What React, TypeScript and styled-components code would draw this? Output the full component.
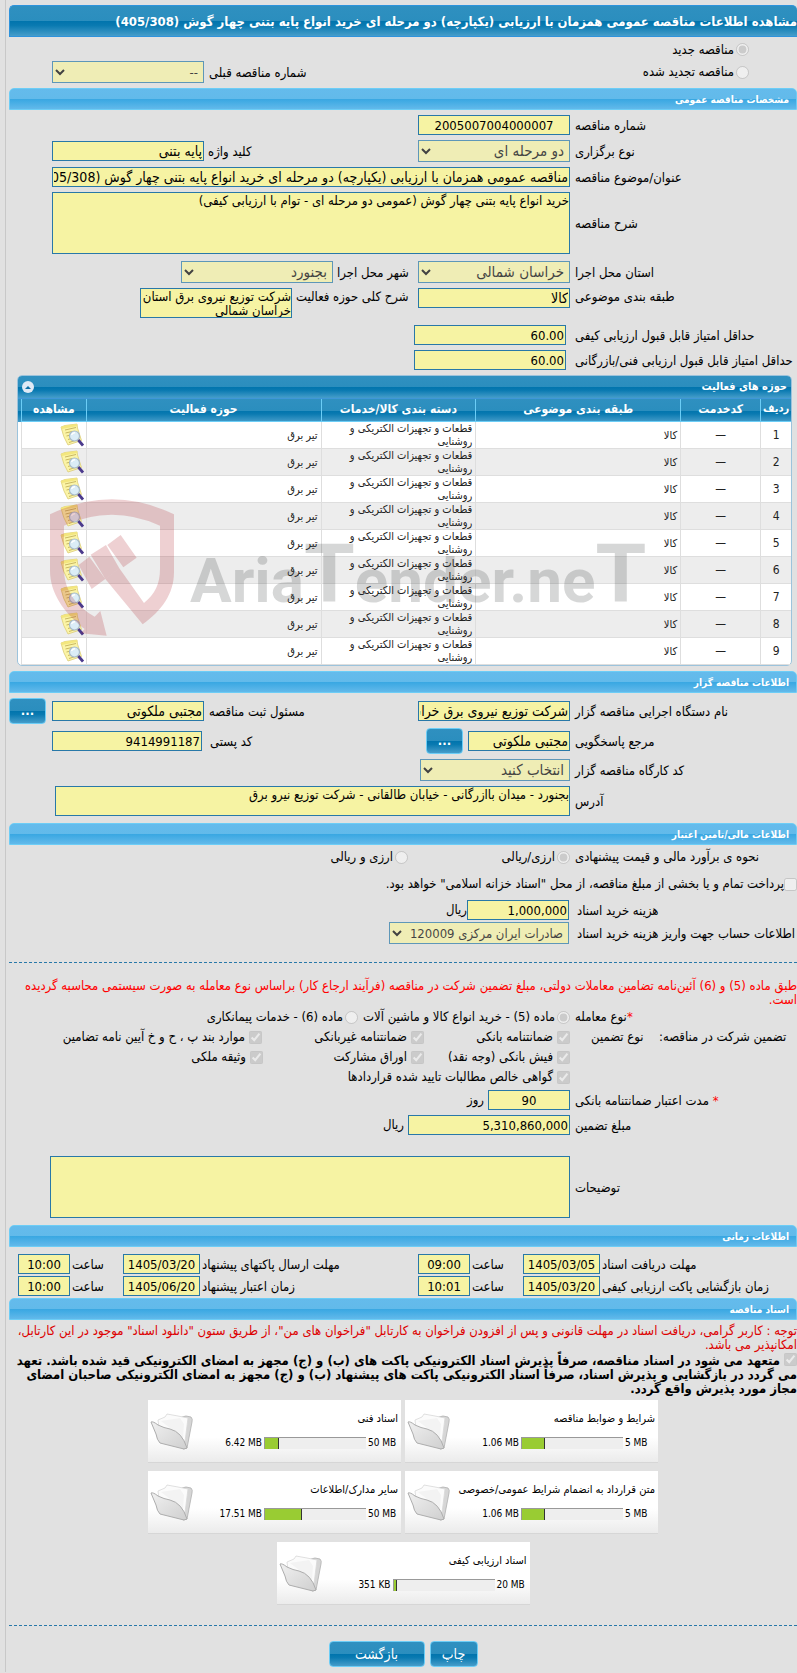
import React from "react";
import styled, { createGlobalStyle, css } from "styled-components";

const Global = createGlobalStyle`
  *, *::before, *::after { box-sizing: border-box; }
  html { background: #e1e1e1; overflow-x: hidden; }
  body {
    margin: 0;
    background: #e1e1e1;
    color: #000;
    font: 13px/14px "DejaVu Sans Condensed", "DejaVu Sans", sans-serif;
  }
`;

const deep = css`
  background: linear-gradient(#2f90c0, #2b8ebe 50%, #0074ad 50%, #0a7ab1 65%, #469dca);
`;

const Page = styled.main`
  margin-left: 5px;
  padding: 5px 0 5px 3px;
  border-left: 1px solid #c8c8c8;
`;

const Title = styled.h1`
  ${deep}
  margin: 0;
  height: 32px;
  border: 1px solid #2e93dc;
  border-right: 0;
  border-radius: 5px 5px 0 0;
  color: #fff;
  font-size: 13px;
  line-height: 32px;
  white-space: nowrap;
`;

const Bar = styled.h2<{ $top?: number }>`
  margin: ${(p) => p.$top ?? 5}px 0 0;
  padding: 0 7px;
  height: 22px;
  border: 1px solid #6ccdf6;
  border-radius: 5px 5px 0 0;
  background: linear-gradient(#64bbec, #62baea 50%, #38a7e2 50%, #62b9ea);
  color: #fff;
  font-size: 10px;
  line-height: 22px;
`;

const Row = styled.div<{ $top?: number; $h?: number; $align?: string }>`
  display: flex;
  align-items: ${(p) => p.$align ?? "center"};
  margin-top: ${(p) => p.$top ?? 5}px;
  min-height: ${(p) => p.$h ?? 20}px;
`;

const Label = styled.label<{ $w?: number; $gap?: number }>`
  flex: 0 0 ${(p) => p.$w ?? 227}px;
  padding-top: 2px;
  padding-left: ${(p) => p.$gap ?? 5}px;
  text-align: left;
  white-space: nowrap;
`;

const SideLabel = styled(Label)`
  flex: 1 1 0;
`;

const Caption = styled.span<{ $w?: number; $gap?: number }>`
  flex: 0 0 ${(p) => p.$w ?? 227}px;
  padding-left: ${(p) => p.$gap ?? 5}px;
  text-align: left;
  white-space: nowrap;
`;

type FieldProps = {
  $w?: number;
  $end?: number;
  $start?: number;
  $center?: boolean;
  $size?: number;
};

const field = css<FieldProps>`
  ${(p) => (p.$w ? `flex: 0 0 ${p.$w}px; width: ${p.$w}px;` : "flex: 1 1 0; min-width: 0;")}
  margin: 0 ${(p) => p.$start ?? 0}px 0 ${(p) => p.$end ?? 0}px;
  border: 1px solid #2878a8;
  border-radius: 0;
  background: #f6f3a3;
  color: #000;
  font-family: inherit;
  font-size: ${(p) => p.$size ?? 13}px;
  outline: 0;
  ${(p) => p.$center && "text-align: center;"}
`;

const Input = styled.input`
  ${field}
  height: 20px;
  padding: 0 1px;
`;

/* Persian text in single-line fields */
const TextInput = styled(Input).attrs({ $size: 14 })``;

const Area = styled.textarea<{ $h: number }>`
  ${field}
  display: block;
  height: ${(p) => p.$h}px;
  padding: 1px 0;
  line-height: 14px;
  resize: none;
  overflow: hidden;
`;

const Select = styled.select`
  ${field}
  height: 22px;
  padding: 0 1px;
  opacity: 0.7;
`;

const Tick = styled.input`
  flex: none;
  width: 13px;
  height: 13px;
  margin: 0;
`;

const Choice = styled.label<{ $w?: number; $gap?: number }>`
  display: flex;
  align-items: center;
  gap: ${(p) => p.$gap ?? 2}px;
  ${(p) => p.$w && `flex: 0 0 ${p.$w}px;`}
  white-space: nowrap;
`;

const Button = styled.button<{ $w: number }>`
  ${deep}
  flex: none;
  width: ${(p) => p.$w}px;
  height: 26px;
  padding: 0;
  border: 1px solid #6ccdf6;
  border-radius: 4px;
  color: #fff;
  font: 14px/22px "DejaVu Sans Condensed", "DejaVu Sans", sans-serif;
`;

const Dots = styled(Button)`
  font-size: 13px;
  font-weight: bold;
`;

const Rule = styled.hr<{ $top: number }>`
  margin: ${(p) => p.$top}px 0 0;
  border: 0;
  border-top: 1px dashed #2878a8;
`;

const Notice = styled.p<{ $top: number; $color: string }>`
  margin: ${(p) => p.$top}px 0 0;
  color: ${(p) => p.$color};
`;

const Pledge = styled.label`
  display: block;
  margin-top: 1px;
  font-weight: bold;
  input { vertical-align: -1px; margin-left: 4px; }
`;

const Star = styled.span`
  color: #f00;
`;

/* activity table */
const Panel = styled.section`
  position: relative;
  margin: 5px 5px 0 8px;
  border: 1px solid #9cc3dc;
  border-radius: 5px;
  background: #fff;
`;

const PanelHead = styled.header`
  ${deep}
  display: flex;
  align-items: center;
  justify-content: space-between;
  height: 23px;
  padding: 0 4px;
  border-bottom: 1px solid #3f97d8;
  border-radius: 4px 4px 0 0;
  color: #fff;
  font-size: 11px;
  font-weight: bold;
`;

const Fold = styled.button`
  display: grid;
  place-items: center;
  width: 12px;
  height: 12px;
  padding: 0;
  border: 0;
  border-radius: 50%;
  background: #dfe9f5;
`;

const TableWrap = styled.div`
  ${deep}
  background-size: 100% 23px;
  background-repeat: no-repeat;
  padding-left: 3px;
`;

const Table = styled.table`
  width: 100%;
  table-layout: fixed;
  border-collapse: separate;
  border-spacing: 0;
  th {
    height: 23px;
    padding: 0 0 3px;
    border-left: 1px solid #6ccdf6;
    border-bottom: 1px solid #6ccdf6;
    color: #fff;
    font-size: 12px;
    white-space: nowrap;
  }
  th:first-child { font-size: 11px; }
  td {
    height: 27px;
    padding: 0 3px 0 4px;
    border-left: 1px solid #dedede;
    border-bottom: 1px solid #dedede;
    color: #222;
    font-size: 11px;
    line-height: 13px;
  }
  tbody tr:nth-child(even) { background: #ededed; }
`;

const Mid = styled.td`
  && { text-align: center; font-size: 12px; padding: 0; }
`;

const IconCell = styled.td`
  && { padding: 0 2px 0 0; }
`;

const IconButton = styled.button`
  display: inline-block;
  width: 24px;
  height: 24px;
  padding: 0;
  border: 0;
  background: none;
  vertical-align: top;
`;

const Watermark = styled.svg`
  position: absolute;
  left: 32px;
  bottom: 22px;
  width: 604px;
  height: 144px;
  pointer-events: none;
`;

/* file cards */
const Cards = styled.div`
  display: flex;
  flex-wrap: wrap;
  justify-content: center;
  gap: 8px 4px;
  max-width: 510px;
  margin: 4px auto 0;
`;

const Card = styled.article`
  display: flex;
  direction: ltr;
  width: 253px;
  height: 63px;
  padding: 12px 3px 0 2px;
  border-bottom: 1px solid #d6d6d6;
  background: linear-gradient(#fff 60%, #ebebeb);
  font-size: 10px;
`;

const CardBody = styled.div`
  flex: 1;
  min-width: 0;
`;

const CardTitle = styled.h3`
  margin: 0;
  direction: rtl;
  font-size: 11px;
  font-weight: normal;
  line-height: 13px;
  white-space: nowrap;
`;

const Usage = styled.div`
  display: flex;
  align-items: center;
  gap: 2px;
  margin-top: 11px;
`;

const Used = styled.span`
  flex: 1;
  text-align: right;
`;

const Total = styled.span`
  width: 30px;
`;

const Track = styled.div`
  width: 102px;
  height: 12px;
  border-top: 1px solid #999;
  border-left: 1px solid #999;
  background: #eee;
`;

const Fill = styled.div`
  height: 100%;
  border-right: 1px solid #333;
  background: #9c3;
`;

const Actions = styled.footer`
  display: flex;
  justify-content: center;
  gap: 5px;
  margin-top: 15px;
`;

const NoteIcon = () => (
  <svg width="24" height="24" viewBox="0 0 24 24" aria-hidden="true">
    <path d="M1 4 L5 2.5 L17 1 L17.5 5 L21.5 17.5 L8 22 Q3 14 1 4Z" fill="#fbf4a6" stroke="#dccd78" strokeWidth=".8" />
    <path d="M1 4 L5 2.5 L17 1 L17.2 3 L2 6Z" fill="#f3e67e" />
    <path d="M5 7 L16 4.5 M5.5 10 L12 8.5 M6.5 13 L10 12.2 M8 16.5 L11 15.6 M9 19.5 L17 17" stroke="#c9b862" strokeWidth="1" fill="none" />
    <circle cx="14.5" cy="13" r="5" fill="#dbedf7" stroke="#a9bccb" strokeWidth="1.2" />
    <path d="M11.5 12 Q12.5 9.5 15 9.8" stroke="#fff" strokeWidth="1.3" fill="none" />
    <path d="M18.3 17 L23 22.5" stroke="#4b3a8c" strokeWidth="2.8" />
  </svg>
);

const FolderIcon = () => (
  <svg width="44" height="40" viewBox="0 0 44 40" aria-hidden="true">
    <defs>
      <linearGradient id="fold" x1="0" y1="0" x2="1" y2="1">
        <stop offset="0" stopColor="#f0f0f0" />
        <stop offset="1" stopColor="#cfcfcf" />
      </linearGradient>
    </defs>
    <path d="M28 8 Q32 4 36 4 L41 5 Q43 7 42 10 L37 36 L33 37Z" fill="#d6d6d6" stroke="#b0b0b0" strokeWidth=".8" />
    <path d="M8 8 L15 5 L17 2 L28 4 L38 6 L35 30 L10 24Z" fill="#fbfbfb" stroke="#d8d8d8" strokeWidth=".8" />
    <path d="M11 9 L30 6 L34 12 L33 26Z" fill="#f3f3f3" />
    <path d="M1 10 Q3 9 8 13 Q14 16 20 17 Q32 20 37 36 L34 37 L10 31 Q7 28 6 22Z" fill="url(#fold)" stroke="#adadad" strokeWidth="1" />
  </svg>
);

const rows = [1, 2, 3, 4, 5, 6, 7, 8, 9];
const files = [
  { name: "شرایط و ضوابط مناقصه", used: "1.06 MB", total: "5 MB", pct: 23 },
  { name: "اسناد فنی", used: "6.42 MB", total: "50 MB", pct: 14 },
  { name: "متن قرارداد به انضمام شرایط عمومی/خصوصی", used: "1.06 MB", total: "5 MB", pct: 23 },
  { name: "سایر مدارک/اطلاعات", used: "17.51 MB", total: "50 MB", pct: 37 },
  { name: "اسناد ارزیابی کیفی", used: "351 KB", total: "20 MB", pct: 3 },
];

type DateProps = { id: string; label: string; date: string; time: string; first?: boolean };
const DateGroup = ({ id, label, date, time, first }: DateProps) => (
  <>
    {first ? (
      <Label htmlFor={id} $w={197} $gap={2}>{label}</Label>
    ) : (
      <SideLabel htmlFor={id} $gap={2}>{label}</SideLabel>
    )}
    <Input id={id} $w={77} $center readOnly value={date} />
    <Label htmlFor={id + "h"} $w={53} $gap={2}>ساعت</Label>
    <Input id={id + "h"} $w={52} $center readOnly value={time} $end={first ? 0 : 9} />
  </>
);

export default function App() {
  return (
    <Page dir="rtl">
      <Global />
      <Title>مشاهده اطلاعات مناقصه عمومی همزمان با ارزیابی (یکپارچه) دو مرحله ای خرید انواع پایه بتنی چهار گوش (405/308)</Title>

      <Row $top={1} $h={23}>
        <Caption $w={48} />
        <Choice><Tick type="radio" name="kind" disabled defaultChecked />مناقصه جدید</Choice>
      </Row>
      <Row $top={0} $h={22}>
        <Caption $w={48} />
        <Choice><Tick type="radio" name="kind" disabled />مناقصه تجدید شده</Choice>
        <SideLabel htmlFor="prev">شماره مناقصه قبلی</SideLabel>
        <Select id="prev" $w={152} $end={43} disabled><option>--</option></Select>
      </Row>

      <Bar>مشخصات مناقصه عمومی</Bar>
      <Row>
        <Label htmlFor="no">شماره مناقصه</Label>
        <Input id="no" $w={152} $center readOnly value="2005007004000007" />
      </Row>
      <Row $h={22}>
        <Label htmlFor="mode">نوع برگزاری</Label>
        <Select id="mode" $w={152} $size={15} disabled><option>دو مرحله ای</option></Select>
        <SideLabel htmlFor="key" $gap={4}>کلید واژه</SideLabel>
        <TextInput id="key" $w={152} $end={43} readOnly value="پایه بتنی" />
      </Row>
      <Row>
        <Label htmlFor="subject">عنوان/موضوع مناقصه</Label>
        <TextInput id="subject" $end={43} readOnly value="مناقصه عمومی همزمان با ارزیابی (یکپارچه) دو مرحله ای خرید انواع پایه بتنی چهار گوش (405/308)" />
      </Row>
      <Row>
        <Label htmlFor="desc">شرح مناقصه</Label>
        <Area id="desc" $h={62} $end={43} readOnly value="خرید انواع پایه بتنی چهار گوش (عمومی دو مرحله ای - توام با ارزیابی کیفی)" />
      </Row>
      <Row $top={7} $h={22}>
        <Label htmlFor="province">استان محل اجرا</Label>
        <Select id="province" $w={152} $size={15} disabled><option>خراسان شمالی</option></Select>
        <Label htmlFor="city" $w={85} $gap={4}>شهر محل اجرا</Label>
        <Select id="city" $w={152} $size={15} disabled><option>بجنورد</option></Select>
      </Row>
      <Row $align="flex-start">
        <Label htmlFor="cat">طبقه بندی موضوعی</Label>
        <TextInput id="cat" $w={152} readOnly value="کالا" />
        <Label htmlFor="scope" $w={126} $gap={4}>شرح کلی حوزه فعالیت</Label>
        <Area id="scope" $w={152} $h={30} readOnly value="شرکت توزیع نیروی برق استان خراسان شمالی" />
      </Row>
      <Row $top={7}>
        <Label htmlFor="s1">حداقل امتیاز قابل قبول ارزیابی کیفی</Label>
        <Input id="s1" $w={152} $start={4} readOnly value="60.00" />
      </Row>
      <Row>
        <Label htmlFor="s2">حداقل امتیاز قابل قبول ارزیابی فنی/بازرگانی</Label>
        <Input id="s2" $w={152} $start={4} readOnly value="60.00" />
      </Row>

      <Panel>
        <PanelHead>
          <span>حوزه های فعالیت</span>
          <Fold type="button" aria-label="بستن">
            <svg width="6" height="3" viewBox="0 0 6 3"><path d="M0 3 L3 0 L6 3Z" fill="#0d6ea5" /></svg>
          </Fold>
        </PanelHead>
        <TableWrap>
          <Table>
            <colgroup>
              <col style={{ width: "4%" }} />
              <col style={{ width: "10.4%" }} />
              <col style={{ width: "26.6%" }} />
              <col style={{ width: "20.1%" }} />
              <col style={{ width: "30.5%" }} />
              <col style={{ width: "8.4%" }} />
            </colgroup>
            <thead>
              <tr>
                <th>ردیف</th>
                <th>کدخدمت</th>
                <th>طبقه بندی موضوعی</th>
                <th>دسته بندی کالا/خدمات</th>
                <th>حوزه فعالیت</th>
                <th>مشاهده</th>
              </tr>
            </thead>
            <tbody>
              {rows.map((n) => (
                <tr key={n}>
                  <Mid>{n}</Mid>
                  <Mid>—</Mid>
                  <td>کالا</td>
                  <td>قطعات و تجهیزات الکتریکی و روشنایی</td>
                  <td>تیر برق</td>
                  <IconCell><IconButton type="button" aria-label="مشاهده"><NoteIcon /></IconButton></IconCell>
                </tr>
              ))}
            </tbody>
          </Table>
        </TableWrap>
        <Watermark viewBox="0 0 604 144" direction="ltr" aria-hidden="true">
          <g transform="scale(.3333)" fill="#aa141e" fillOpacity=".2">
            <path d="M0 46 Q185 -44 372 46 V220 C372 285 335 335 278 376 L166 240 L208 208 L282 312 C315 285 330 255 330 210 V80 Q185 15 42 80 V210 C42 280 85 325 134 353 L151 336 L170 410 L92 403 L104 390 C40 340 0 280 0 215Z" />
            <path d="M172 138 L212 108 L260 176 L220 205Z M122 167 L168 138 L208 208 L166 240Z M86 198 L118 173 L166 240 L125 270Z" />
          </g>
          <text x="140" y="103" fill="#323737" fillOpacity=".2" fontFamily="Roboto, sans-serif" fontWeight="bold" fontSize="62">
            Aria<tspan fontSize="82">T</tspan>ender.ne<tspan fontSize="82">T</tspan>
          </text>
        </Watermark>
      </Panel>

      <Bar>اطلاعات مناقصه گزار</Bar>
      <Row $h={26}>
        <Label htmlFor="org">نام دستگاه اجرایی مناقصه گزار</Label>
        <TextInput id="org" $w={152} readOnly value="شرکت توزیع نیروی برق خراسان شمالی" />
        <SideLabel htmlFor="reg">مسئول ثبت مناقصه</SideLabel>
        <TextInput id="reg" $w={152} $end={6} readOnly value="مجتبی ملکوتی" />
        <Dots type="button" $w={37}>...</Dots>
      </Row>
      <Row $top={4} $h={26}>
        <Label htmlFor="resp">مرجع پاسخگویی</Label>
        <TextInput id="resp" $w={102} $end={5} readOnly value="مجتبی ملکوتی" />
        <Dots type="button" $w={37}>...</Dots>
        <SideLabel htmlFor="post" $gap={8}>کد پستی</SideLabel>
        <Input id="post" $w={150} $end={43} readOnly value="9414991187" />
      </Row>
      <Row $h={22}>
        <Label htmlFor="shop">کد کارگاه مناقصه گزار</Label>
        <Select id="shop" $w={150} $size={15} disabled><option>انتخاب کنید</option></Select>
      </Row>
      <Row>
        <Label htmlFor="addr">آدرس</Label>
        <Area id="addr" $h={30} $end={46} readOnly value="بجنورد - میدان باازرگانی - خیابان طالقانی - شرکت توزیع نیرو برق" />
      </Row>

      <Bar $top={7}>اطلاعات مالی/تامین اعتبار</Bar>
      <Row $top={2}>
        <Caption>نحوه ی برآورد مالی و قیمت پیشنهادی</Caption>
        <Choice $w={162}><Tick type="radio" name="cur" disabled defaultChecked />ارزی/ریالی</Choice>
        <Choice><Tick type="radio" name="cur" disabled />ارزی و ریالی</Choice>
      </Row>
      <Row $top={6} $h={22}>
        <Choice $gap={0}><Tick type="checkbox" disabled />پرداخت تمام و یا بخشی از مبلغ مناقصه، از محل "اسناد خزانه اسلامی" خواهد بود.</Choice>
      </Row>
      <Row>
        <Label htmlFor="cost" $w={228} $gap={8}>هزینه خرید اسناد</Label>
        <Input id="cost" $w={102} readOnly value="1,000,000" />
        <span>ریال</span>
      </Row>
      <Row $top={2} $h={22}>
        <Label htmlFor="acc" $w={228} $gap={8}>اطلاعات حساب جهت واریز هزینه خرید اسناد</Label>
        <Select id="acc" $w={180} disabled><option>صادرات ایران مرکزی 120009</option></Select>
      </Row>

      <Rule $top={18} />
      <Notice $top={16} $color="#f00">طبق ماده (5) و (6) آئین‌نامه تضامین معاملات دولتی، مبلغ تضمین شرکت در مناقصه (فرآیند ارجاع کار) براساس نوع معامله به صورت سیستمی محاسبه گردیده است.</Notice>
      <Row $top={0}>
        <Caption><Star>*</Star>نوع معامله</Caption>
        <Choice $w={212}><Tick type="radio" name="deal" disabled defaultChecked />ماده (5) - خرید انواع کالا و ماشین آلات</Choice>
        <Choice><Tick type="radio" name="deal" disabled />ماده (6) - خدمات پیمانکاری</Choice>
      </Row>
      <Row $top={0}>
        <Caption $w={138} $gap={0}>تضمین شرکت در مناقصه:</Caption>
        <Caption $w={89} $gap={21}>نوع تضمین</Caption>
        <Choice $w={146} $gap={4}><Tick type="checkbox" disabled defaultChecked />ضمانتنامه بانکی</Choice>
        <Choice $w={162} $gap={4}><Tick type="checkbox" disabled defaultChecked />ضمانتنامه غیربانکی</Choice>
        <Choice $gap={4}><Tick type="checkbox" disabled defaultChecked />موارد بند پ ، ح و خ آیین نامه تضامین</Choice>
      </Row>
      <Row $top={0}>
        <Caption />
        <Choice $w={146} $gap={4}><Tick type="checkbox" disabled defaultChecked />فیش بانکی (وجه نقد)</Choice>
        <Choice $w={161} $gap={4}><Tick type="checkbox" disabled defaultChecked />اوراق مشارکت</Choice>
        <Choice $gap={4}><Tick type="checkbox" disabled defaultChecked />وثیقه ملکی</Choice>
      </Row>
      <Row $top={0}>
        <Caption />
        <Choice $gap={4}><Tick type="checkbox" disabled defaultChecked />گواهی خالص مطالبات تایید شده قراردادها</Choice>
      </Row>
      <Row $top={3}>
        <Label htmlFor="days"><Star>*</Star> مدت اعتبار ضمانتنامه بانکی</Label>
        <Input id="days" $w={82} $end={4} $center readOnly value="90" />
        <span>روز</span>
      </Row>
      <Row>
        <Label htmlFor="sum">مبلغ تضمین</Label>
        <Input id="sum" $w={162} $end={4} readOnly value="5,310,860,000" />
        <span>ریال</span>
      </Row>
      <Row $top={21}>
        <Label htmlFor="notes">توضیحات</Label>
        <Area id="notes" $h={62} $end={41} readOnly value="" />
      </Row>

      <Bar $top={7}>اطلاعات زمانی</Bar>
      <Row $top={7}>
        <DateGroup id="d1" first label="مهلت دریافت اسناد" date="1405/03/05" time="09:00" />
        <DateGroup id="d2" label="مهلت ارسال پاکتهای پیشنهاد" date="1405/03/20" time="10:00" />
      </Row>
      <Row $top={2}>
        <DateGroup id="d3" first label="زمان بازگشایی پاکت ارزیابی کیفی" date="1405/03/20" time="10:01" />
        <DateGroup id="d4" label="زمان اعتبار پیشنهاد" date="1405/06/20" time="10:00" />
      </Row>

      <Bar $top={2}>اسناد مناقصه</Bar>
      <Notice $top={4} $color="#d00">توجه : کاربر گرامی، دریافت اسناد در مهلت قانونی و پس از افزودن فراخوان به کارتابل "فراخوان های من"، از طریق ستون "دانلود اسناد" موجود در این کارتابل، امکانپذیر می باشد.</Notice>
      <Pledge><Tick type="checkbox" disabled defaultChecked />متعهد می شود در اسناد مناقصه، صرفاً پذیرش اسناد الکترونیکی پاکت های (ب) و (ج) مجهز به امضای الکترونیکی قید شده باشد. تعهد می گردد در بازگشایی و پذیرش اسناد، صرفاً اسناد الکترونیکی پاکت های پیشنهاد (ب) و (ج) مجهز به امضای الکترونیکی صاحبان امضای مجاز مورد پذیرش واقع گردد.</Pledge>

      <Cards>
        {files.map((f) => (
          <Card key={f.name}>
            <FolderIcon />
            <CardBody>
              <CardTitle>{f.name}</CardTitle>
              <Usage>
                <Used>{f.used}</Used>
                <Track role="progressbar" aria-label={f.name} aria-valuenow={f.pct}>
                  <Fill style={{ width: `${f.pct}%` }} />
                </Track>
                <Total>{f.total}</Total>
              </Usage>
            </CardBody>
          </Card>
        ))}
      </Cards>

      <Rule $top={20} />
      <Actions>
        <Button type="button" $w={48}>چاپ</Button>
        <Button type="button" $w={96}>بازگشت</Button>
      </Actions>
    </Page>
  );
}
